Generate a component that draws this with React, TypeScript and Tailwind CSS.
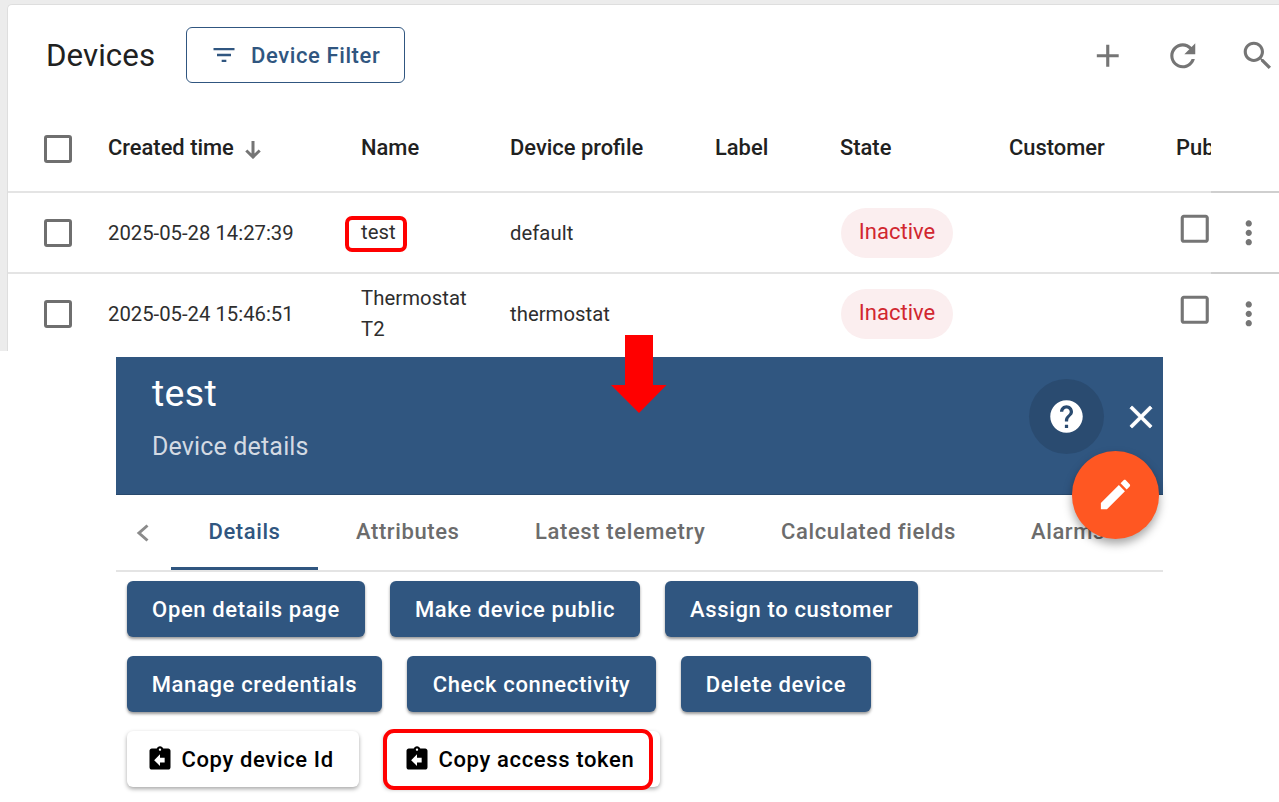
import React from "react";

type IconProps = { d: string; className: string };
const Icon = ({ d, className }: IconProps) => (
  <svg viewBox="0 0 24 24" fill="currentColor" className={`shrink-0 ${className}`}>
    <path d={d} />
  </svg>
);

const paths = {
  filter: "M10 18h4v-2h-4v2zM3 6v2h18V6H3zm3 7h12v-2H6v2z",
  add: "M19 13h-6v6h-2v-6H5v-2h6V5h2v6h6v2z",
  refresh:
    "M17.65 6.35C16.2 4.9 14.21 4 12 4c-4.42 0-7.99 3.58-7.99 8s3.57 8 7.99 8c3.73 0 6.84-2.55 7.73-6h-2.08c-.82 2.33-3.04 4-5.65 4-3.31 0-6-2.69-6-6s2.69-6 6-6c1.66 0 3.14.69 4.22 1.78L13 11h7V4l-2.35 2.35z",
  search:
    "M15.5 14h-.79l-.28-.27C15.41 12.59 16 11.11 16 9.5 16 5.91 13.09 3 9.5 3S3 5.91 3 9.5 5.91 16 9.5 16c1.61 0 3.09-.59 4.23-1.57l.27.28v.79l5 4.99L20.49 19l-4.99-5zm-6 0C7.01 14 5 11.99 5 9.5S7.01 5 9.5 5 14 7.01 14 9.5 11.99 14 9.5 14z",
  more: "M12 8c1.1 0 2-.9 2-2s-.9-2-2-2-2 .9-2 2 .9 2 2 2zm0 2c-1.1 0-2 .9-2 2s.9 2 2 2 2-.9 2-2-.9-2-2-2zm0 6c-1.1 0-2 .9-2 2s.9 2 2 2 2-.9 2-2-.9-2-2-2z",
  box: "M19 5v14H5V5h14m0-2H5c-1.1 0-2 .9-2 2v14c0 1.1.9 2 2 2h14c1.1 0 2-.9 2-2V5c0-1.1-.9-2-2-2z",
  help: "M12 2C6.48 2 2 6.48 2 12s4.48 10 10 10 10-4.48 10-10S17.52 2 12 2zm1 17h-2v-2h2v2zm2.07-7.75l-.9.92C13.45 12.9 13 13.5 13 15h-2v-.5c0-1.1.45-2.1 1.17-2.83l1.24-1.26c.37-.36.59-.86.59-1.41 0-1.1-.9-2-2-2s-2 .9-2 2H8c0-2.21 1.79-4 4-4s4 1.79 4 4c0 .88-.36 1.68-.93 2.25z",
  close:
    "M19 6.41L17.59 5 12 10.59 6.41 5 5 6.41 10.59 12 5 17.59 6.41 19 12 13.41 17.59 19 19 17.59 13.41 12z",
  edit: "M3 17.25V21h3.75L17.81 9.94l-3.75-3.75L3 17.25zM20.71 7.04c.39-.39.39-1.02 0-1.41l-2.34-2.34c-.39-.39-1.02-.39-1.41 0l-1.83 1.83 3.75 3.75 1.83-1.83z",
  clipboard:
    "M19 3h-4.18C14.4 1.84 13.3 1 12 1c-1.3 0-2.4.84-2.82 2H5c-1.1 0-2 .9-2 2v14c0 1.1.9 2 2 2h14c1.1 0 2-.9 2-2V5c0-1.1-.9-2-2-2zm-7 0c.55 0 1 .45 1 1s-.45 1-1 1-1-.45-1-1 .45-1 1-1zm4 12h-4v3l-5-5 5-5v3h4v4z",
};

const columns = "grid grid-cols-[64px_253px_149px_205px_125px_169px_167px_35px_68px] pl-9";

const Checkbox = () => <span className="block size-7 rounded-[3px] border-[3px] border-[#6f6f6f]" />;

type Device = { time: string; name: React.ReactNode; profile: string };
const devices: Device[] = [
  {
    time: "2025-05-28 14:27:39",
    name: (
      <span className="relative">
        test
        <span className="absolute -left-4 -top-px h-9 w-[62px] rounded-[7px] border-4 border-[#ff0000]" />
      </span>
    ),
    profile: "default",
  },
  { time: "2025-05-24 15:46:51", name: "Thermostat T2", profile: "thermostat" },
];

const DeviceRow = ({ time, name, profile }: Device) => (
  <div className={`${columns} h-[81px] items-stretch text-[20.3px] text-[#2e2e2e]`}>
    <div className="flex items-center pb-0.5">
      <Checkbox />
    </div>
    <div className="flex items-center pb-px">{time}</div>
    <div className="flex items-center pb-0.5 pr-8 leading-[31px] tracking-[0.08px]">{name}</div>
    <div className="flex items-center pb-px tracking-[0.04px]">{profile}</div>
    <div />
    <div className="flex items-center pb-0.5">
      <span className="ml-px flex h-[50px] w-28 items-center justify-center rounded-full bg-[#fbeeef] pb-0.5 text-[22px] text-[#d12730]">
        Inactive
      </span>
    </div>
    <div />
    <div className="flex items-center pb-2.5">
      <Icon d={paths.box} className="size-[37.5px] text-[#757575]" />
    </div>
    <div className="col-start-9 flex items-center justify-center border-b-2 border-[#cfcfcf] bg-white pl-2 text-[#757575]">
      <Icon d={paths.more} className="size-[37.5px]" />
    </div>
  </div>
);

const DevicesTable = () => (
  <section className="h-[351px] overflow-hidden bg-[#ececec] pl-[7px] pt-1">
    <div className="h-full rounded-tl-[5px] border-l border-t border-[#dedede] bg-white">
      <div className="flex h-[100px] items-center pl-[38px]">
        <h1 className="w-[140px] pt-0.5 text-[31.25px] tracking-[0.06px] text-[#212121]">Devices</h1>
        <button className="flex h-14 w-[219px] items-center rounded-md border-[1.5px] border-[#305680] pl-[23px] text-[22px] font-medium text-[#305680]">
          <Icon d={paths.filter} className="mr-[13px] size-7" />
          <span className="tracking-[0.6px]">Device Filter</span>
        </button>
        <div className="ml-auto flex gap-[37.5px] pr-[3px] pt-px text-[#757575]">
          <Icon d={paths.add} className="size-[37.5px]" />
          <Icon d={paths.refresh} className="size-[37.5px]" />
          <Icon d={paths.search} className="size-[37.5px]" />
        </div>
      </div>
      <div className={`${columns} h-[88px] text-[21.9px] font-medium text-[#212121]`}>
        <div className="flex items-center">
          <Checkbox />
        </div>
        <div className="flex items-center pb-0.5">
          Created time
          <svg viewBox="0 0 16 18" className="ml-[11px] mt-1 h-[18px] w-4" fill="none" stroke="#757575" strokeWidth="3">
            <path d="M8 0v16M1.300 9.500l6.700 6.500 6.700-6.500" />
          </svg>
        </div>
        <div className="flex items-center pb-0.5">Name</div>
        <div className="flex items-center pb-0.5">Device profile</div>
        <div className="flex items-center pb-0.5">Label</div>
        <div className="flex items-center pb-0.5">State</div>
        <div className="flex items-center pb-0.5">Customer</div>
        <div className="flex items-center overflow-hidden pb-0.5">Public</div>
        <div className="border-b-2 border-[#cfcfcf]" />
      </div>
      <div className="-mt-0.5 border-t-2 border-[#e4e4e4]">
        <DeviceRow {...devices[0]} />
      </div>
      <div className="-mt-0.5 border-t-2 border-[#e4e4e4]">
        <DeviceRow {...devices[1]} />
      </div>
    </div>
  </section>
);

const ActionButton = ({ label, className }: { label: string; className: string }) => (
  <button
    className={`flex h-14 items-center justify-center whitespace-nowrap rounded-md bg-[#305680] text-[22px] font-medium text-white shadow-[0_2px_3px_rgba(0,0,0,0.4)] ${className}`}
  >
    {label}
  </button>
);

const CopyButton = ({ label, className, children }: { label: string; className: string; children?: React.ReactNode }) => (
  <button
    className={`relative flex h-14 items-center whitespace-nowrap rounded-md bg-white pl-[18.5px] text-[22px] font-medium text-black shadow-[0_2px_4px_rgba(0,0,0,0.35)] ${className}`}
  >
    <Icon d={paths.clipboard} className="mr-2 size-7" />
    {label}
    {children}
  </button>
);

const DeviceDetails = () => (
  <section className="relative ml-[116px] mt-1.5 w-[1047px]">
    <header className="flex h-[138px] border-b border-[#28496d] bg-[#305680] pl-9 text-white">
      <div className="flex flex-col">
        <h2 className="mt-3 text-[37.5px] leading-[48px] tracking-[0.3px]">test</h2>
        <p className="mt-[15px] text-[25px] leading-[30px] tracking-[0.16px] text-[#d3dae3]">Device details</p>
      </div>
      <div className="ml-auto mt-[22px] flex h-[75px] items-center">
        <span className="flex size-[75px] items-center justify-center rounded-full bg-[#2a4b70]">
          <Icon d={paths.help} className="size-[39px]" />
        </span>
        <Icon d={paths.close} className="ml-[18px] mr-[3.5px] size-[38px] stroke-current stroke-[0.5]" />
      </div>
    </header>
    <nav className="flex h-[77px] overflow-hidden whitespace-nowrap border-b-2 border-[#e4e4e4] text-[22px] font-medium text-[#6c6c6c]">
      <span className="flex w-[55px] items-center pl-5">
        <svg viewBox="0 0 13 18" className="h-[18px] w-[13px]" fill="none" stroke="#8b8b8b" strokeWidth="3">
          <path d="M11.5 1.5L3 9l8.5 7.5" />
        </svg>
      </span>
      <span className="flex w-[147px] items-center justify-center border-b-3 border-[#305680] tracking-[0.6px] text-[#305680]">Details</span>
      <span className="flex w-[179px] items-center pb-[3px] pl-[38px] tracking-[0.6px]">Attributes</span>
      <span className="flex w-[246px] items-center pb-[3px] pl-[38px] tracking-[0.62px]">Latest telemetry</span>
      <span className="flex w-[250px] items-center pb-[3px] pl-[38px] tracking-[0.62px]">Calculated fields</span>
      <span className="flex items-center pb-[3px] pl-[38px] tracking-[0.6px]">Alarms</span>
    </nav>
    <button className="absolute left-[955.5px] top-[94px] flex size-[87.5px] items-center justify-center rounded-full bg-[#ff5722] text-white shadow-[0_5px_10px_rgba(0,0,0,0.35)]">
      <Icon d={paths.edit} className="size-[39px]" />
    </button>
    <svg viewBox="0 0 56 78" className="absolute left-[495px] -top-[22px] h-[78px] w-14" fill="#ff0000">
      <path d="M14 0h28v50h13.500L28 78 0 50h14z" />
    </svg>
    <div className="flex flex-col gap-[19px] pl-[11px] pt-[9px]">
      <div className="flex gap-[25px]">
        <ActionButton label="Open details page" className="w-[238px] tracking-[0.64px]" />
        <ActionButton label="Make device public" className="w-[250px] tracking-[0.64px]" />
        <ActionButton label="Assign to customer" className="w-[253px] tracking-[0.64px]" />
      </div>
      <div className="flex gap-[25px]">
        <ActionButton label="Manage credentials" className="w-[255px] tracking-[0.65px]" />
        <ActionButton label="Check connectivity" className="w-[249px] tracking-[0.64px]" />
        <ActionButton label="Delete device" className="w-[190px] tracking-[0.64px]" />
      </div>
      <div className="flex gap-[25px]">
        <CopyButton label="Copy device Id" className="w-[232px] tracking-[0.64px]" />
        <CopyButton label="Copy access token" className="w-[276px] tracking-[0.64px]">
          <span className="absolute -left-px -top-0.5 h-[61px] w-[270px] rounded-[11px] border-4 border-[#ff0000]" />
        </CopyButton>
      </div>
    </div>
  </section>
);

export default function App() {
  return (
    <main className="h-[802px] w-[1279px] overflow-hidden bg-white font-['Roboto',sans-serif]">
      <DevicesTable />
      <DeviceDetails />
    </main>
  );
}
